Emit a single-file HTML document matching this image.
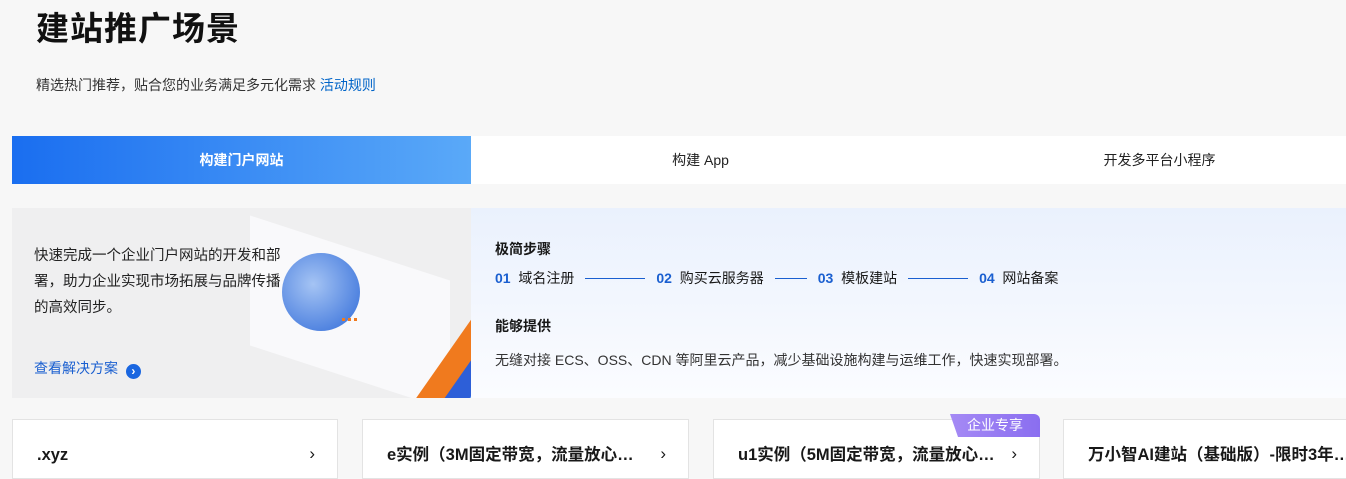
<!DOCTYPE html>
<html><head><meta charset="utf-8"><style>
*{margin:0;padding:0;box-sizing:border-box}
body{width:1346px;height:468px;overflow:hidden;background:#f7f7f7;font-family:"Liberation Sans","Noto Sans CJK SC",sans-serif;color:#181818;position:relative}
.abs{position:absolute}
h1{position:absolute;left:36px;top:2px;font-size:33px;font-weight:700;color:#111;letter-spacing:1px}
.sub{left:36px;top:75px;font-size:14px;color:#333}
.sub a{color:#0064c8;text-decoration:none}
.tabs{left:12px;top:136px;width:1334px;height:48px;background:#fff;display:flex;overflow:hidden}
.tab{display:flex;align-items:center;justify-content:center;font-size:14px;color:#222;flex:none}
.tab.on{background:linear-gradient(90deg,#1a6ef0,#5aa9f8);color:#fff;font-weight:700}
.left{left:12px;top:208px;width:459px;height:190px;background:#efeff0;overflow:hidden}
.right{left:471px;top:208px;width:875px;height:190px;background:linear-gradient(180deg,#eaf1fd,#fbfcff)}
.card{top:419px;height:60px;background:#fff;border:1px solid #e3e3e3;font-size:16.5px;font-weight:700;padding:25px 0 0 24px;line-height:20px;white-space:nowrap;overflow:hidden}
.card .ch{position:absolute;right:22px;top:24px;font-weight:400;font-size:17px;line-height:20px}
</style></head><body>
<h1>建站推广场景</h1>
<div class="abs sub">精选热门推荐，贴合您的业务满足多元化需求 <a>活动规则</a></div>
<div class="abs tabs"><div class="tab on" style="width:459px">构建门户网站</div><div class="tab" style="width:459px">构建 App</div><div class="tab" style="width:459px">开发多平台小程序</div></div>
<div class="abs left">
<div class="abs" style="left:238px;top:40px;width:200px;height:130px;background:#f9f9fb;transform:skewY(18deg)"></div>
<div class="abs" style="left:270px;top:45px;width:78px;height:78px;border-radius:50%;background:radial-gradient(circle at 40% 40%,#a5c4f4,#2f6ad8);"></div>
<div class="abs" style="left:330px;top:110px;width:3px;height:3px;background:#f07a1e;box-shadow:6px 0 #f07a1e,12px 0 #f07a1e"></div>
<div class="abs" style="left:380px;top:150px;width:120px;height:30px;background:#f07a1e;transform:rotate(-55deg)"></div>
<div class="abs" style="left:405px;top:155px;width:120px;height:30px;background:#2d5fd8;transform:rotate(-55deg)"></div>
<div class="abs" style="left:430px;top:155px;width:120px;height:30px;background:#6ea8ee;transform:rotate(-55deg)"></div>
<div class="abs" style="left:22px;top:35px;width:256px;font-size:14.5px;line-height:26px;color:#222">快速完成一个企业门户网站的开发和部署，助力企业实现市场拓展与品牌传播的高效同步。</div>
<div class="abs" style="left:22px;top:150px;font-size:14px;color:#1a5fd0">查看解决方案 <span style="display:inline-block;width:15px;height:15px;border-radius:50%;background:#1a66e0;color:#fff;font-size:12px;line-height:15px;text-align:center;vertical-align:-2px;margin-left:4px;font-weight:700">›</span></div>
</div>
<div class="abs right">
<div class="abs" style="left:24px;top:31px;font-size:14px;font-weight:700">极简步骤</div>
<div class="abs" style="left:24px;top:60px;font-size:14px;display:flex;align-items:center;white-space:nowrap">
<b style="color:#1a5fd0">01</b>&nbsp;&nbsp;域名注册<span style="display:inline-block;width:60px;height:1px;background:#1a5fd0;margin:0 11px"></span><b style="color:#1a5fd0">02</b>&nbsp;&nbsp;购买云服务器<span style="display:inline-block;width:32px;height:1px;background:#1a5fd0;margin:0 11px"></span><b style="color:#1a5fd0">03</b>&nbsp;&nbsp;模板建站<span style="display:inline-block;width:60px;height:1px;background:#1a5fd0;margin:0 11px"></span><b style="color:#1a5fd0">04</b>&nbsp;&nbsp;网站备案</div>
<div class="abs" style="left:24px;top:108px;font-size:14px;font-weight:700">能够提供</div>
<div class="abs" style="left:24px;top:142px;font-size:14px;color:#333;white-space:nowrap">无缝对接 ECS、OSS、CDN 等阿里云产品，减少基础设施构建与运维工作，快速实现部署。</div>
</div>
<div class="abs card" style="left:12px;width:326px">.xyz<span class="ch">›</span></div>
<div class="abs card" style="left:362px;width:327px">e实例（3M固定带宽，流量放心…<span class="ch">›</span></div>
<div class="abs card" style="left:713px;width:327px">u1实例（5M固定带宽，流量放心…<span class="ch">›</span></div>
<div class="abs" style="left:950px;top:414px;width:90px;height:23px;background:linear-gradient(90deg,#a58af5,#8a6ef0);color:#fff;font-size:14px;line-height:23px;text-align:center;border-radius:0 6px 0 0;clip-path:polygon(0 0,100% 0,100% 100%,8px 100%)">企业专享</div>
<div class="abs card" style="left:1063px;width:300px">万小智AI建站（基础版）-限时3年…</div>
</body></html>
